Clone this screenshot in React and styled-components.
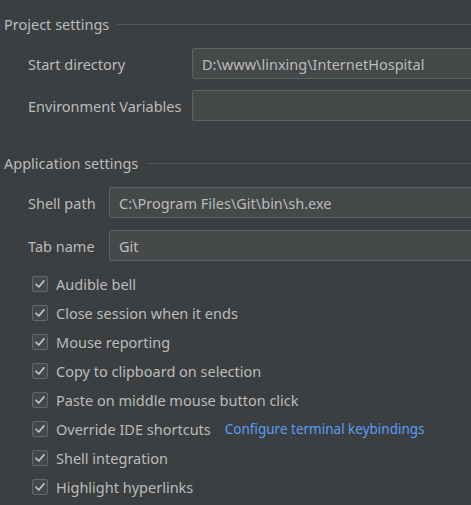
import React from 'react'
import styled, { createGlobalStyle } from 'styled-components';

const Global = createGlobalStyle`
  html, body {
    margin: 0;
    padding: 0;
    background: #3c3f41;
  }
  body {
    font-family: "Noto Sans", "Open Sans", sans-serif;
    font-size: 14.5px;
    color: #bbbbbb;
  }
`;

const CHECKS = [
  { label: 'Audible bell' },
  { label: 'Close session when it ends' },
  { label: 'Mouse reporting' },
  { label: 'Copy to clipboard on selection' },
  { label: 'Paste on middle mouse button click' },
  { label: 'Override IDE shortcuts', link: 'Configure terminal keybindings' },
  { label: 'Shell integration' },
  { label: 'Highlight hyperlinks' },
];

const Check = () => (
  <Box>
    <svg width="12" height="12" viewBox="0 0 12 12">
      <path d="M2 6.2 L4.8 9 L10 2.8" fill="none" stroke="#c9c9c9" strokeWidth="1.6" strokeLinecap="round" strokeLinejoin="round" />
    </svg>
  </Box>
);

const App = () => {
  return (
    <Page>
      <Global />
      <Title>Project settings</Title>
      <FieldGrid $labelWidth="164px">
        <Label>Start directory</Label>
        <Input>D:\www\linxing\InternetHospital</Input>
        <Label>Environment Variables</Label>
        <Input />
      </FieldGrid>

      <Title $spaced>Application settings</Title>
      <FieldGrid $labelWidth="81px" $gap="12px">
        <Label>Shell path</Label>
        <Input>C:\Program Files\Git\bin\sh.exe</Input>
        <Label>Tab name</Label>
        <Input>Git</Input>
      </FieldGrid>

      <CheckList>
        {CHECKS.map((c) => (
          <CheckRow key={c.label}>
            <Check />
            <span>{c.label}</span>
            {c.link && <Link>{c.link}</Link>}
          </CheckRow>
        ))}
      </CheckList>
    </Page>
  )
}

const Page = styled.div`
  width: 471px;
  height: 505px;
  overflow: hidden;
  padding: 12px 0 0 4px;
  box-sizing: border-box;
`;

const Title = styled.div`
  display: flex;
  align-items: center;
  gap: 8px;
  height: 24px;
  margin-top: ${(p) => (p.$spaced ? '30px' : '0')};
  white-space: nowrap;
  &::after {
    content: '';
    flex: 1;
    height: 1px;
    background: #515658;
  }
`;

const FieldGrid = styled.div`
  display: grid;
  grid-template-columns: ${(p) => p.$labelWidth} 400px;
  row-gap: ${(p) => p.$gap || '11px'};
  align-items: center;
  margin-top: 12px;
  padding-left: 24px;
`;

const Label = styled.div`
  white-space: nowrap;
`;

const Input = styled.div`
  height: 31px;
  box-sizing: border-box;
  background: #45494a;
  border: 1px solid #5e6162;
  border-radius: 2px;
  padding: 0 9px;
  display: flex;
  align-items: center;
  white-space: nowrap;
  color: #bbbbbb;
`;

const CheckList = styled.div`
  display: flex;
  flex-direction: column;
  gap: 10px;
  margin-top: 13px;
  padding-left: 28px;
`;

const CheckRow = styled.div`
  display: flex;
  align-items: center;
  height: 19px;
  gap: 8px;
  white-space: nowrap;
`;

const Box = styled.div`
  width: 16px;
  height: 16px;
  box-sizing: border-box;
  border: 1px solid #646769;
  border-radius: 2px;
  background: #43494a;
  display: flex;
  align-items: center;
  justify-content: center;
  flex-shrink: 0;
`;

const Link = styled.span`
  color: #589df6;
  font-size: 13.5px;
  margin-left: 6px;
`;

export default App;
